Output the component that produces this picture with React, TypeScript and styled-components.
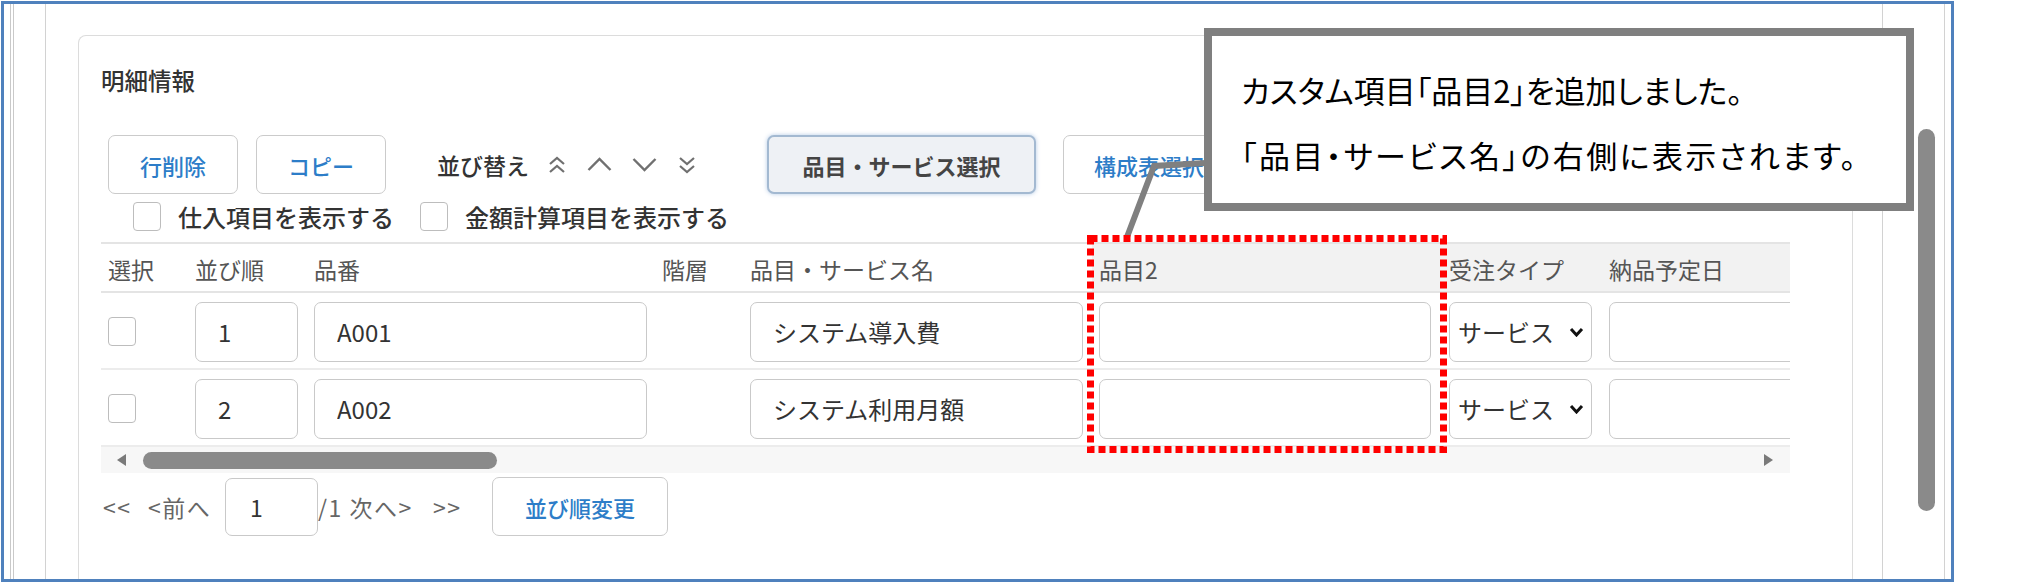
import styled, { createGlobalStyle } from "styled-components";

const GlobalStyle = createGlobalStyle`
  html, body {
    margin: 0;
    padding: 0;
    background: #fff;
  }
  body {
    font-family: "Noto Sans CJK JP", "Noto Sans", sans-serif;
    color: #333;
  }
  * {
    box-sizing: border-box;
  }
  button, input {
    font: inherit;
  }
`;

const Screen = styled.div`
  position: relative;
  width: 2027px;
  height: 588px;
  padding: 1px 0 0 1px;
  overflow: hidden;
  background: #fff;
`;

const Frame = styled.div`
  display: flex;
  width: 1953px;
  height: 581px;
  border: 3px solid #4f81bd;
  overflow: hidden;
`;

const Gutter = styled.div`
  width: 41px;
  height: 100%;
  padding-left: 6px;
  flex-shrink: 0;
`;

const GutterLines = styled.div`
  width: 4px;
  height: 100%;
  border-left: 1px solid #c9c9c9;
  border-right: 1px solid #c9c9c9;
`;

const Page = styled.div`
  width: 1838px;
  height: 100%;
  padding: 31px 0 0 32px;
  border-left: 1px solid #d2d2d2;
  border-right: 1px solid #d2d2d2;
  flex-shrink: 0;
`;

const ScrollColumn = styled.div`
  width: 62px;
  height: 100%;
  padding: 125px 0 0 35px;
  border-right: 1px solid #d2d2d2;
  flex-shrink: 0;
`;

const ScrollThumb = styled.div`
  width: 17px;
  height: 382px;
  border-radius: 9px;
  background: #8a8a8a;
`;

const Card = styled.section`
  width: 1775px;
  height: 100%;
  padding: 28px 0 0 22px;
  border: 1px solid #dcdcdc;
  border-bottom: none;
  border-radius: 8px 8px 0 0;
`;

const Title = styled.h2`
  margin: 0;
  font-size: 23.5px;
  line-height: 32px;
  font-weight: 500;
  color: #333;
`;

const Toolbar = styled.div`
  display: flex;
  align-items: center;
  gap: 18px;
  height: 59px;
  margin-top: 39px;
  padding-left: 7px;
`;

const ToolButton = styled.button<{ $w: number; $ml?: number; $active?: boolean }>`
  flex-shrink: 0;
  width: ${(p) => p.$w}px;
  height: 59px;
  margin-left: ${(p) => p.$ml ?? 0}px;
  padding: 0;
  border: ${(p) => (p.$active ? "2px solid #a3b9d1" : "1.5px solid #cbcbcb")};
  border-radius: 7px;
  background: ${(p) => (p.$active ? "#eef1f5" : "#fff")};
  box-shadow: ${(p) => (p.$active ? "0 0 4px rgba(90, 140, 200, 0.45)" : "none")};
  color: ${(p) => (p.$active ? "#444" : "#2d7dc8")};
  font-size: 22px;
  font-weight: ${(p) => (p.$active ? 700 : 500)};
  white-space: nowrap;
`;

const SortGroup = styled.div`
  display: flex;
  align-items: center;
  gap: 20px;
  margin-left: 33px;
`;

const SortLabel = styled.span`
  font-size: 23px;
  font-weight: 500;
  color: #333;
  margin-right: -2px;
`;

const OptionRow = styled.div`
  display: flex;
  align-items: center;
  gap: 26px;
  height: 29px;
  margin-top: 8px;
  padding-left: 32px;
`;

const CheckLabel = styled.label`
  display: flex;
  align-items: center;
  gap: 17px;
  font-size: 24px;
  line-height: 29px;
  font-weight: 500;
  color: #333;
`;

const CheckBox = styled.span`
  display: inline-block;
  flex-shrink: 0;
  width: 28px;
  height: 29px;
  border: 1.5px solid #bdbdbd;
  border-radius: 4px;
  background: #fff;
`;

const TableArea = styled.div`
  width: 1689px;
  margin-top: 11px;
  overflow: hidden;
`;

const COLS = "87px 119px 348px 88px 349px 350px 160px 300px";

const HeaderRow = styled.div`
  display: grid;
  grid-template-columns: ${COLS};
  height: 51px;
  border-top: 2px solid #e4e4e4;
  border-bottom: 2px solid #e4e4e4;
`;

const HeaderCell = styled.div<{ $shaded?: boolean }>`
  display: flex;
  align-items: center;
  padding: 3px 0 0 7px;
  background: ${(p) => (p.$shaded ? "#f2f2f2" : "#fff")};
  font-size: 23px;
  color: #555;
  white-space: nowrap;
`;

const BodyRow = styled.div`
  display: grid;
  grid-template-columns: ${COLS};
  align-items: center;
  height: 77px;
  border-bottom: 2px solid #ececec;
`;

const Cell = styled.div`
  display: flex;
  align-items: center;
  padding: 2px 0 0 7px;
`;

const Field = styled.input<{ $w: number }>`
  width: ${(p) => p.$w}px;
  height: 60px;
  padding: 0 0 0 22px;
  border: 1.5px solid #c9c9c9;
  border-radius: 7px;
  background: #fff;
  font-size: 24px;
  color: #333;
  outline: none;
`;

const SelectBox = styled.div`
  display: flex;
  align-items: center;
  justify-content: space-between;
  width: 143px;
  height: 60px;
  padding: 0 7px 0 8px;
  border: 1.5px solid #c9c9c9;
  border-radius: 7px;
  font-size: 24px;
  color: #333;
`;

const HScroll = styled.div`
  display: flex;
  align-items: center;
  height: 26px;
  padding: 0 17px 0 16px;
  background: #f7f7f7;
`;

const Arrow = styled.span<{ $dir: "left" | "right" }>`
  width: 0;
  height: 0;
  border-top: 6px solid transparent;
  border-bottom: 6px solid transparent;
  ${(p) => (p.$dir === "left" ? "border-right: 9px solid #7a7a7a;" : "border-left: 9px solid #7a7a7a;")}
`;

const HThumb = styled.div`
  width: 354px;
  height: 17px;
  margin-left: 17px;
  border-radius: 9px;
  background: #8a8a8a;
`;

const HSpacer = styled.div`
  flex: 1;
`;

const Pager = styled.div`
  display: flex;
  align-items: center;
  height: 59px;
  margin-top: 4px;
  padding-left: 2px;
`;

const PagerText = styled.span<{ $w: number }>`
  width: ${(p) => p.$w}px;
  font-size: 23px;
  letter-spacing: 1.5px;
  color: #666;
  white-space: nowrap;
`;

const PageInput = styled.input`
  width: 93px;
  height: 58px;
  padding: 0 0 0 24px;
  border: 1.5px solid #c9c9c9;
  border-radius: 7px;
  font-size: 23px;
  color: #333;
  outline: none;
`;

const Callout = styled.div`
  position: absolute;
  left: 1204px;
  top: 28px;
  width: 710px;
  height: 183px;
  padding: 21px 0 0 29px;
  border: 8px solid #7f7f7f;
  background: #fff;
  z-index: 3;
`;

const CalloutLine = styled.p<{ $spacing?: number }>`
  margin: 0;
  font-size: 31px;
  line-height: 65px;
  font-feature-settings: "palt";
  letter-spacing: ${(p) => p.$spacing ?? 0}px;
  color: #000;
  white-space: nowrap;
`;

const Marks = styled.svg`
  position: absolute;
  left: 0;
  top: 0;
  z-index: 2;
  pointer-events: none;
`;

const SortIcon = ({ kind }: { kind: "top" | "up" | "down" | "bottom" }) => {
  if (kind === "up" || kind === "down") {
    const pts = kind === "up" ? "1.5,13 12.5,2 23.5,13" : "1.5,2 12.5,13 23.5,2";
    return (
      <svg width="25" height="15" viewBox="0 0 25 15">
        <polyline points={pts} fill="none" stroke="#707070" strokeWidth="2.4" />
      </svg>
    );
  }
  const a = kind === "top" ? "3,9 10,3 17,9" : "3,3 10,9 17,3";
  const b = kind === "top" ? "3,17 10,11 17,17" : "3,11 10,17 17,11";
  return (
    <svg width="20" height="20" viewBox="0 0 20 20">
      <polyline points={a} fill="none" stroke="#707070" strokeWidth="2.2" />
      <polyline points={b} fill="none" stroke="#707070" strokeWidth="2.2" />
    </svg>
  );
};

const headers = [
  { label: "選択" },
  { label: "並び順" },
  { label: "品番" },
  { label: "階層" },
  { label: "品目・サービス名" },
  { label: "品目2", shaded: true },
  { label: "受注タイプ", shaded: true },
  { label: "納品予定日", shaded: true },
];

const rows = [
  { no: "1", code: "A001", name: "システム導入費" },
  { no: "2", code: "A002", name: "システム利用月額" },
];

const App = () => {
  return (
    <Screen>
      <GlobalStyle />
      <Frame>
        <Gutter>
          <GutterLines />
        </Gutter>
        <Page>
          <Card>
            <Title>明細情報</Title>
            <Toolbar>
              <ToolButton $w={130}>行削除</ToolButton>
              <ToolButton $w={130}>コピー</ToolButton>
              <SortGroup>
                <SortLabel>並び替え</SortLabel>
                <SortIcon kind="top" />
                <SortIcon kind="up" />
                <SortIcon kind="down" />
                <SortIcon kind="bottom" />
              </SortGroup>
              <ToolButton $w={269} $ml={52} $active>品目・サービス選択</ToolButton>
              <ToolButton $w={172} $ml={9}>構成表選択</ToolButton>
            </Toolbar>
            <OptionRow>
              <CheckLabel><CheckBox />仕入項目を表示する</CheckLabel>
              <CheckLabel><CheckBox />金額計算項目を表示する</CheckLabel>
            </OptionRow>
            <TableArea>
              <HeaderRow>
                {headers.map((h) => (
                  <HeaderCell key={h.label} $shaded={h.shaded}>{h.label}</HeaderCell>
                ))}
              </HeaderRow>
              {rows.map((r) => (
                <BodyRow key={r.no}>
                  <Cell><CheckBox /></Cell>
                  <Cell><Field $w={103} defaultValue={r.no} readOnly /></Cell>
                  <Cell><Field $w={333} defaultValue={r.code} readOnly /></Cell>
                  <Cell />
                  <Cell><Field $w={333} defaultValue={r.name} readOnly /></Cell>
                  <Cell><Field $w={332} defaultValue="" readOnly /></Cell>
                  <Cell>
                    <SelectBox>
                      サービス
                      <svg width="15" height="10" viewBox="0 0 15 10">
                        <polyline points="2,2 7.5,8 13,2" fill="none" stroke="#111" strokeWidth="3" />
                      </svg>
                    </SelectBox>
                  </Cell>
                  <Cell><Field $w={260} defaultValue="" readOnly /></Cell>
                </BodyRow>
              ))}
              <HScroll>
                <Arrow $dir="left" />
                <HThumb />
                <HSpacer />
                <Arrow $dir="right" />
              </HScroll>
            </TableArea>
            <Pager>
              <PagerText $w={45}>{"<<"}</PagerText>
              <PagerText $w={77}>{"<前へ"}</PagerText>
              <PageInput defaultValue="1" readOnly />
              <PagerText $w={115}>{"/1 次へ>"}</PagerText>
              <PagerText $w={59}>{">>"}</PagerText>
              <ToolButton $w={176}>並び順変更</ToolButton>
            </Pager>
          </Card>
        </Page>
        <ScrollColumn>
          <ScrollThumb />
        </ScrollColumn>
      </Frame>
      <Marks width="2027" height="588" viewBox="0 0 2027 588">
        <polyline points="1206,163 1154,166 1127,237" fill="none" stroke="#808080" strokeWidth="6" />
        <rect x="1090.5" y="238.5" width="353" height="211" fill="none" stroke="#ff0000" strokeWidth="7" strokeDasharray="7 4" />
      </Marks>
      <Callout>
        <CalloutLine>カスタム項目「品目2」を追加しました。</CalloutLine>
        <CalloutLine $spacing={2.4}>「品目・サービス名」の右側に表示されます。</CalloutLine>
      </Callout>
    </Screen>
  );
};

export default App;
